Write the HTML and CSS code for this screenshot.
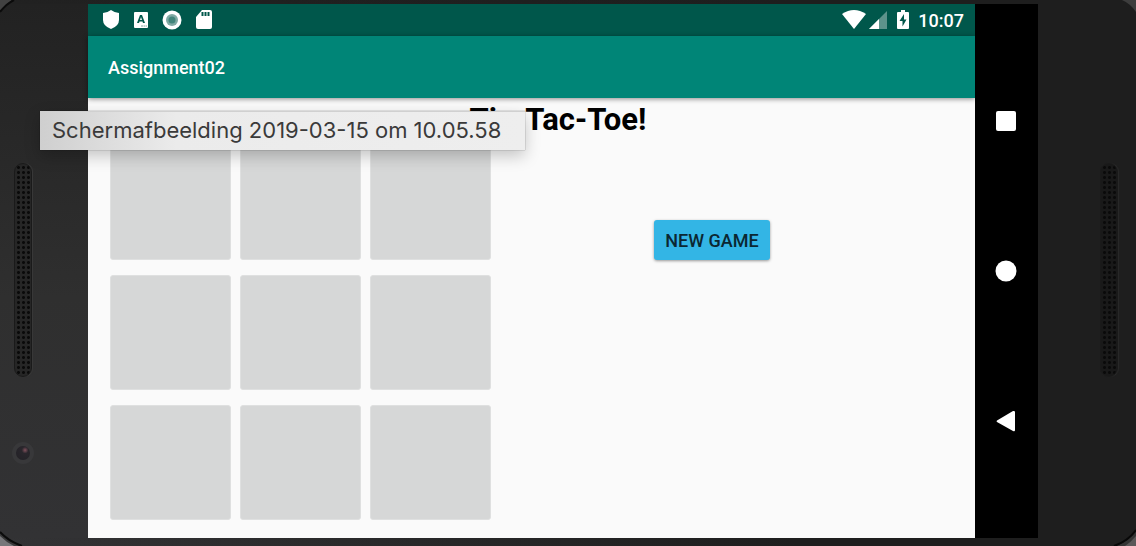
FILE: index.html
```html
<!DOCTYPE html>
<html lang="en">
<head>
<meta charset="utf-8">
<title>Assignment02</title>
<link rel="stylesheet" href="styles.css">
</head>
<body>
<div class="phone">
  <div class="bezel bezel-left">
    <svg class="corner corner-top" width="24" height="24" viewBox="0 0 24 24" aria-hidden="true">
      <path d="M0 0H12Q5 4 0 11Z" fill="#414141"/>
      <path d="M14 0Q6 4 0 12" fill="none" stroke="#0b0b0b" stroke-width="2"/>
    </svg>
    <div class="speaker"></div>
    <div class="camera"></div>
    <svg class="corner corner-bottom" width="24" height="24" viewBox="0 0 24 24" aria-hidden="true">
      <path d="M0 11Q8 19 20 24H0Z" fill="#39393a"/>
      <path d="M0 14Q6 20 14 24H0Z" fill="#77777a"/>
      <path d="M0 10Q8 19 22 24" fill="none" stroke="#0b0b0b" stroke-width="2"/>
    </svg>
  </div>
  <main class="screen">
    <header class="status">
      <div class="status-icons">
        <svg width="18" height="20" viewBox="0 0 18 20" aria-hidden="true"><path d="M9 0Q13 3 17 3V10Q17 16 9 19Q1 16 1 10V3Q5 3 9 0Z" fill="#fff"/></svg>
        <svg width="16" height="16" viewBox="0 0 16 16" aria-hidden="true"><rect x="1" y="0" width="14" height="16" rx="1" fill="#fff"/><path d="M4 11L7 3H9L12 11H10L9.500 9.500H6.500L6 11ZM7 8H9L8 5Z" fill="#00574b" fill-rule="evenodd"/><path d="M8 14H14" stroke="#85aaa4" stroke-dasharray="2 .5"/></svg>
        <svg width="20" height="20" viewBox="0 0 20 20" aria-hidden="true"><circle cx="10" cy="10" r="9.500" fill="#fff"/><circle cx="10" cy="10" r="6" fill="#7fa9a3"/><circle cx="10" cy="10" r="3.500" fill="#42857b"/></svg>
        <svg width="18" height="20" viewBox="0 0 18 20" aria-hidden="true"><path d="M7 0H15Q17 0 17 2V17Q17 19 15 19H3Q1 19 1 17V7Z" fill="#fff"/><path d="M7.500 2V6M10.500 2V6M13.500 2V6" stroke="#00574b" stroke-width="2"/></svg>
      </div>
      <div class="status-system">
        <svg width="24" height="20" viewBox="0 0 24 20" aria-hidden="true"><path d="M0 4Q12 -4 24 4L12 19Z" fill="#fff"/></svg>
        <svg width="20" height="20" viewBox="0 0 20 20" aria-hidden="true"><path d="M19 1V19H1Z" fill="#5d938b"/><path d="M11 9V19H1Z" fill="#fff"/></svg>
        <svg class="battery" width="14" height="20" viewBox="0 0 14 20" aria-hidden="true"><path d="M5 0H9V2H12Q13 2 13 3V18Q13 19 12 19H2Q1 19 1 18V3Q1 2 2 2H5Z" fill="#fff"/><path d="M8 4L3.500 11H6.500V16.500L10.500 9.500H8Z" fill="#00574b"/></svg>
        <time>10:07</time>
      </div>
    </header>
    <div class="appbar">Assignment02</div>
    <section class="content">
      <h1>Tic-Tac-Toe!</h1>
      <div class="game">
        <div class="board">
          <button type="button" class="cell" aria-label="Row 1, column 1"></button>
          <button type="button" class="cell" aria-label="Row 1, column 2"></button>
          <button type="button" class="cell" aria-label="Row 1, column 3"></button>
          <button type="button" class="cell" aria-label="Row 2, column 1"></button>
          <button type="button" class="cell" aria-label="Row 2, column 2"></button>
          <button type="button" class="cell" aria-label="Row 2, column 3"></button>
          <button type="button" class="cell" aria-label="Row 3, column 1"></button>
          <button type="button" class="cell" aria-label="Row 3, column 2"></button>
          <button type="button" class="cell" aria-label="Row 3, column 3"></button>
        </div>
        <div class="actions"><button type="button" class="new-game">NEW GAME</button></div>
      </div>
    </section>
  </main>
  <nav class="navbar">
    <button type="button" aria-label="Recent apps"><svg width="22" height="22" viewBox="0 0 22 22"><rect x="1" y="1" width="20" height="20" rx="2" fill="#fff"/></svg></button>
    <button type="button" aria-label="Home"><svg width="22" height="22" viewBox="0 0 22 22"><circle cx="11" cy="11" r="10.500" fill="#fff"/></svg></button>
    <button type="button" aria-label="Back"><svg width="22" height="22" viewBox="0 0 22 22"><path d="M2 10.500Q1 11 2 12L18 21Q20 22 20 20V2Q20 .5 18 1Z" fill="#fff"/></svg></button>
  </nav>
  <div class="bezel bezel-right">
    <svg class="corner corner-top" width="24" height="24" viewBox="0 0 24 24" aria-hidden="true">
      <path d="M10 0H24V12Q19 4 10 0Z" fill="#3d3d3d"/>
    </svg>
    <div class="speaker"></div>
    <svg class="corner corner-bottom" width="24" height="24" viewBox="0 0 24 24" aria-hidden="true">
      <path d="M24 9Q17 19 4 24H24Z" fill="#343434"/>
      <path d="M24 14Q19 20 13 24H24Z" fill="#5b5859"/>
      <path d="M24 8Q16 19 2 24" fill="none" stroke="#080808" stroke-width="2"/>
    </svg>
  </div>
</div>
<div class="tooltip" role="tooltip">Schermafbeelding 2019-03-15 om 10.05.58</div>
</body>
</html>
```
FILE: styles.css
```css
* {
  box-sizing: border-box;
}

body {
  margin: 0;
  font-family: Roboto, "Liberation Sans", sans-serif;
}

button {
  border: 0;
  padding: 0;
  font: inherit;
}

svg {
  display: block;
}

.phone {
  display: grid;
  grid-template-columns: 88px 1fr 63px 98px;
  min-height: 100vh;
  padding: 4px 0 8px;
  background: linear-gradient(90deg, transparent, #1e1e1e 70%), linear-gradient(#212121, #2f2f2f 60%, #333335);
}

.bezel {
  display: flex;
  flex-direction: column;
  padding-top: 159px;
}

.bezel-left {
  padding-left: 14px;
  background: linear-gradient(#222, #2f2f2f 55%, #323234);
}

.bezel-right {
  padding-left: 62px;
  background: #1e1e1e;
}

.corner {
  position: absolute;
}

.corner-top {
  top: 0;
}

.corner-bottom {
  bottom: 0;
}

.bezel-left .corner {
  left: 0;
}

.bezel-right .corner {
  right: 0;
}

.speaker {
  width: 18px;
  height: 214px;
  border: 1px solid #1a1a1a;
  border-radius: 9px;
  background: radial-gradient(circle, #0a0a0a 1px, transparent 2px) 1px 1px / 5px 5px, #262626;
  box-shadow: 1px 0 1px #3a3a3a;
}

.bezel-right .speaker {
  background-color: #191919;
  box-shadow: 1px 0 1px #2a2a2a;
}

.camera {
  width: 22px;
  height: 22px;
  margin-top: 65px;
  margin-left: -2px;
  border: 4px solid #38383a;
  border-radius: 50%;
  background: radial-gradient(circle at 65% 30%, #80505c, #29262c 25%, #222126);
}

.screen {
  display: flex;
  flex-direction: column;
  background: #fafafa;
}

.status {
  display: flex;
  align-items: center;
  justify-content: space-between;
  height: 32px;
  padding: 0 11px 0 14px;
  background: #00574b;
  color: #fff;
}

.status-icons {
  display: flex;
  align-items: center;
  gap: 13px;
}

.status-system {
  display: flex;
  align-items: center;
  gap: 2px;
  font-size: 18px;
  font-weight: 500;
}

.battery {
  margin: 0 6px;
}

.appbar {
  display: flex;
  align-items: center;
  height: 62px;
  padding: 0 20px;
  background: #008577;
  box-shadow: 0 1px 5px rgba(0, 0, 0, 0.45);
  color: #fff;
  font-size: 18px;
  font-weight: 500;
}

.content {
  flex: 1;
  padding: 4px 0 18px 22px;
}

h1 {
  margin: 0;
  padding-left: 31px;
  font-size: 31px;
  font-weight: 700;
  line-height: 36px;
  text-align: center;
}

.game {
  display: flex;
  margin-top: 7px;
}

.board {
  display: grid;
  grid-template-columns: repeat(3, 121px);
  grid-auto-rows: 115px;
  gap: 15px 9px;
}

.cell {
  border: 1px solid #dfe0e0;
  border-radius: 3px;
  background: #d6d7d7;
}

.actions {
  flex: 1;
  padding: 75px 42px 0 0;
  text-align: center;
}

.new-game {
  height: 40px;
  padding: 0 11px;
  border-radius: 3px;
  background: #33b5e5;
  box-shadow: 0 1px 3px rgba(0, 0, 0, 0.4);
  color: #0b2732;
  font-size: 18px;
  font-weight: 500;
}

.navbar {
  display: flex;
  flex-direction: column;
  align-items: center;
  justify-content: space-between;
  padding: 106px 2px 106px 0;
  background: #000;
}

.navbar button {
  background: none;
}

.tooltip {
  position: absolute;
  top: 111px;
  left: 40px;
  height: 39px;
  padding: 0 24px 0 12px;
  border-top: 1px solid #d0d0d0;
  background: linear-gradient(90deg, #cfcfcf, #ebebeb 28%, #eee);
  box-shadow: 0 0 1px rgba(0, 0, 0, 0.5), 0 6px 16px rgba(0, 0, 0, 0.22);
  color: #3a3a3a;
  font-family: Inter, "Liberation Sans", sans-serif;
  font-size: 22px;
  line-height: 37px;
  white-space: nowrap;
}
```
